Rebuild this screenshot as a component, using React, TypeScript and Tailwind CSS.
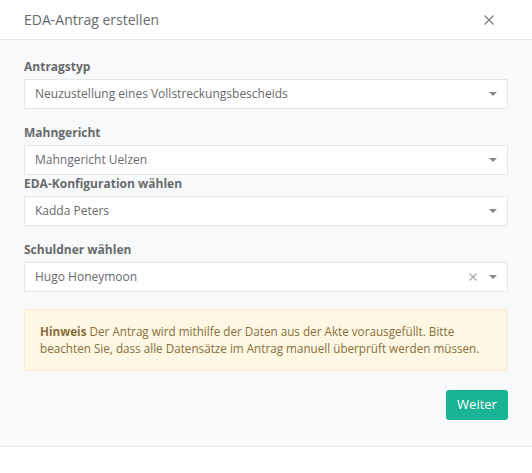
import React from "react";

function Caret() {
  return (
    <svg width="8" height="4" viewBox="0 0 8 4" className="shrink-0">
      <path d="M0 0 L8 0 L4 4 Z" fill="#888888" />
    </svg>
  );
}

function Select({ value, clearable }: { value: string; clearable?: boolean }) {
  return (
    <div className="flex h-[30px] items-center border border-[#e5e6e7] bg-white pl-[10px] pr-[9px]">
      <span className="flex-1 truncate text-[12px] text-[#676a6c]">{value}</span>
      {clearable && (
        <svg width="8" height="8" viewBox="0 0 8 8" className="mr-[12px] shrink-0">
          <path d="M0.5 0.5 L7.5 7.5 M7.5 0.5 L0.5 7.5" stroke="#aaaaaa" strokeWidth="1.2" />
        </svg>
      )}
      <span className="mr-[1px] flex">
        <Caret />
      </span>
    </div>
  );
}

function Label({ children }: { children: React.ReactNode }) {
  return (
    <div className="mb-[3px] h-[18px] text-[12px] font-bold leading-[18px] text-[#676a6c]">{children}</div>
  );
}

export default function App() {
  return (
    <div
      className="w-[532px] h-[473px] bg-white text-[#676a6c]"
      style={{ fontFamily: '"Open Sans", "Noto Sans", sans-serif' }}
    >
      <div className="flex h-[40px] items-center justify-between border-b border-[#e7eaec] pl-[24px] pr-[38px]">
        <span className="text-[14px] leading-[20px] text-[#676a6c]">EDA-Antrag erstellen</span>
        <svg width="10" height="10" viewBox="0 0 10 10">
          <path d="M0.5 0.5 L9.5 9.5 M9.5 0.5 L0.5 9.5" stroke="#777777" strokeWidth="1.1" />
        </svg>
      </div>
      <div className="flex h-[407px] flex-col border-b border-[#e7eaec] bg-[#f8f9fa] px-[24px] pt-[18px]">
        <div className="mb-[15px]">
          <Label>Antragstyp</Label>
          <Select value="Neuzustellung eines Vollstreckungsbescheids" />
        </div>
        <div>
          <Label>Mahngericht</Label>
          <Select value="Mahngericht Uelzen" />
        </div>
        <div className="mb-[15px]">
          <Label>EDA-Konfiguration wählen</Label>
          <Select value="Kadda Peters" />
        </div>
        <div>
          <Label>Schuldner wählen</Label>
          <Select value="Hugo Honeymoon" clearable />
        </div>
        <div className="mt-[17px] border border-[#f8ecd0] bg-[#fdf8e4] px-[15px] py-[13px] text-[11.7px] leading-[17px] text-[#8a6d3b]">
          <b>Hinweis</b> Der Antrag wird mithilfe der Daten aus der Akte vorausgefüllt. Bitte
          <br />
          beachten Sie, dass alle Datensätze im Antrag manuell überprüft werden müssen.
        </div>
        <div className="mt-[19px] flex justify-end">
          <button className="h-[30px] w-[62px] rounded-[3px] bg-[#1ab394] text-[13px] text-white">Weiter</button>
        </div>
      </div>
    </div>
  );
}
